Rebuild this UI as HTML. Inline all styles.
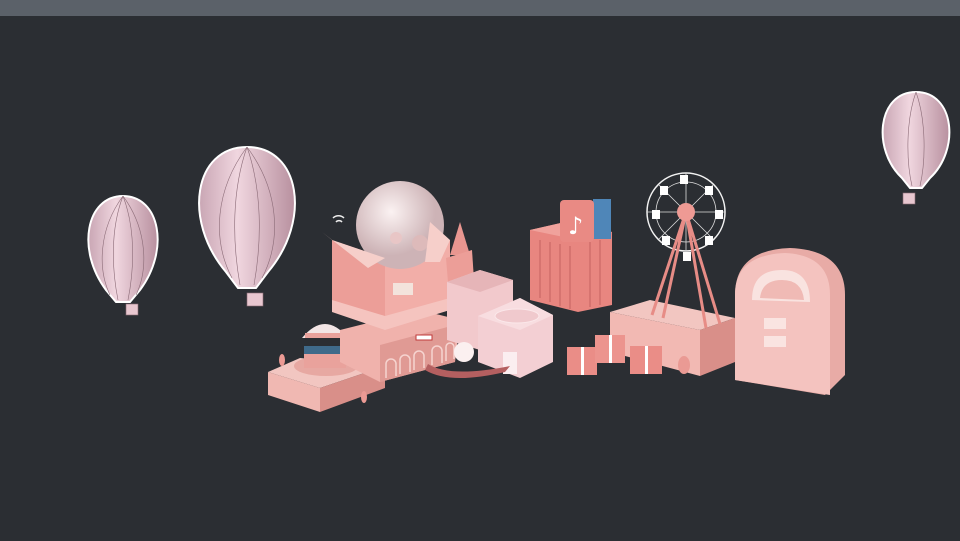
<!DOCTYPE html>
<html><head><meta charset="utf-8"><style>
html,body{margin:0;padding:0;background:#2b2e33;width:960px;height:541px;overflow:hidden}
</style></head><body>
<svg width="960" height="541" viewBox="0 0 960 541" xmlns="http://www.w3.org/2000/svg">
<defs>
<linearGradient id="bal" x1="0" x2="1"><stop offset="0" stop-color="#c9a6b4"/><stop offset="0.4" stop-color="#f0d6df"/><stop offset="1" stop-color="#b8909f"/></linearGradient>
<radialGradient id="moon" cx="0.4" cy="0.35"><stop offset="0" stop-color="#fbf2f2"/><stop offset="1" stop-color="#cdb3b6"/></radialGradient>
</defs>
<rect x="0" y="0" width="960" height="16" fill="#5b6169"/>
<rect x="0" y="16" width="960" height="525" fill="#2b2e33"/>

<!-- balloons -->
<g stroke="#8a6a76" stroke-width="0.6">
<path d="M123 196 C160 196 170 250 140 290 L130 302 L116 302 L106 290 C76 250 86 196 123 196Z" fill="url(#bal)" stroke="#fff" stroke-width="2"/>
<path d="M123 196 C110 230 112 270 118 300 M123 196 C136 230 134 270 128 300 M123 196 C98 230 98 270 110 295 M123 196 C148 230 148 270 136 295" fill="none"/>
<rect x="126" y="304" width="12" height="11" fill="#e8c7d0"/>
<path d="M247 147 C300 147 312 220 268 272 L256 288 L238 288 L226 272 C182 220 194 147 247 147Z" fill="url(#bal)" stroke="#fff" stroke-width="2"/>
<path d="M247 147 C232 190 232 240 240 285 M247 147 C262 190 262 240 254 285 M247 147 C215 190 212 240 232 278 M247 147 C279 190 282 240 262 278" fill="none"/>
<rect x="247" y="293" width="16" height="13" fill="#e8c7d0"/>
<path d="M916 92 C955 92 960 150 930 178 L922 188 L910 188 L902 178 C872 150 877 92 916 92Z" fill="url(#bal)" stroke="#fff" stroke-width="2"/>
<path d="M916 92 C906 120 906 160 912 186 M916 92 C926 120 926 160 920 186" fill="none"/>
<rect x="903" y="193" width="12" height="11" fill="#e8c7d0"/>
</g>

<!-- left platform -->
<polygon points="268,372 300,358 385,366 320,388" fill="#f2c6c1"/>
<polygon points="268,372 320,388 320,412 268,395" fill="#f0b8b2"/>
<polygon points="320,388 385,366 385,388 320,412" fill="#d98f89"/>
<ellipse cx="326" cy="366" rx="32" ry="10" fill="#e7a8a2"/>
<rect x="304" y="350" width="42" height="18" fill="#e9a29c"/>
<rect x="304" y="346" width="42" height="8" fill="#3f6a8a"/>
<path d="M302 338 Q325 310 348 338Z" fill="#f3e6e6"/>
<rect x="305" y="333" width="40" height="5" fill="#e9a29c"/>

<!-- big box building lower -->
<polygon points="340,330 420,310 460,320 455,362 380,382 340,362" fill="#f0b2ac"/>
<polygon points="380,345 455,325 455,362 380,382" fill="#e09a94"/>
<g fill="none" stroke="#f6d4d0" stroke-width="1.5"><path d="M386 378 v-14 a5 5 0 0 1 10 0 v12 M400 374 v-14 a5 5 0 0 1 10 0 v12 M414 370 v-14 a5 5 0 0 1 10 0 v12 M432 365 v-14 a5 5 0 0 1 10 0 v12 M446 361 v-14 a4 4 0 0 1 8 0 v12"/></g>
<rect x="416" y="335" width="16" height="5" fill="#fff" stroke="#c03a3a"/>
<!-- box body -->
<polygon points="332,240 385,258 385,322 332,306" fill="#ec9e98"/>
<polygon points="385,258 450,240 450,305 385,322" fill="#f2aea8"/>
<polygon points="332,300 385,316 450,298 450,310 385,330 332,312" fill="#f5c4bf"/>
<circle cx="400" cy="225" r="44" fill="url(#moon)"/>
<circle cx="396" cy="238" r="6" fill="#e8c6c6"/><circle cx="420" cy="243" r="8" fill="#ddbaba"/>
<polygon points="322,232 332,240 385,258 368,268" fill="#f6cfca"/>
<polygon points="430,222 450,240 440,262 425,262" fill="#f6cfca"/>
<rect x="393" y="283" width="20" height="12" fill="#f3e3dc"/>
<path d="M333 218 a8 8 0 0 1 11 0 M336 222 a4 4 0 0 1 6 0" stroke="#eee" stroke-width="1.5" fill="none"/>

<!-- tower -->
<polygon points="460,222 450,255 470,255" fill="#e89690"/>
<polygon points="446,258 472,250 474,280 448,282" fill="#ec9e98"/>
<!-- pink building -->
<polygon points="447,282 480,270 513,280 513,340 480,350 447,340" fill="#f2c9cc"/>
<polygon points="447,282 480,292 513,280 480,270" fill="#e6b5b8"/>
<!-- dome box -->
<polygon points="478,316 520,298 553,315 553,362 520,378 478,362" fill="#f3cfd3"/>
<polygon points="478,316 520,330 553,315 520,298" fill="#f8dde0"/>
<ellipse cx="517" cy="316" rx="22" ry="7" fill="#f0c9cd" stroke="#fbe8ea"/>
<rect x="503" y="352" width="14" height="22" fill="#fbeef0"/>
<path d="M425 370 Q450 385 505 372 L510 366 Q450 378 428 364Z" fill="#b45f60"/>
<circle cx="464" cy="352" r="10" fill="#fbf0f0"/>

<!-- music building -->
<polygon points="530,230 565,222 612,232 612,305 578,312 530,300" fill="#e88680"/>
<polygon points="530,230 565,222 612,232 578,240" fill="#f0a29c"/>
<g stroke="#cf6f6a" stroke-width="1.5">
<path d="M540 240v58 M550 242v60 M560 244v62 M570 246v63 M590 242v65 M600 240v65"/></g>
<rect x="593" y="199" width="18" height="40" fill="#4f86b8"/>
<rect x="560" y="200" width="34" height="42" rx="4" fill="#e98a84"/>
<text x="568" y="234" font-family="DejaVu Sans, sans-serif" font-size="24" fill="#fff">♪</text>

<!-- right platform -->
<polygon points="610,312 650,300 735,318 700,330" fill="#f2c6c1"/>
<polygon points="610,312 700,330 700,376 610,352" fill="#f2b9b3"/>
<polygon points="700,330 735,318 735,362 700,376" fill="#d98f89"/>
<!-- ferris wheel -->
<circle cx="686" cy="212" r="39" fill="none" stroke="#f2f2f2" stroke-width="1.5"/>
<circle cx="686" cy="212" r="30" fill="none" stroke="#ddd" stroke-width="0.8"/>
<g stroke="#ddd" stroke-width="0.8"><path d="M647 212h78 M686 173v78 M659 185l54 54 M713 185l-54 54"/></g>
<g stroke="#e78c86" stroke-width="3"><path d="M686 212 L652 315 M686 212 L663 318 M686 212 L706 328 M686 212 L720 324"/></g>
<circle cx="686" cy="212" r="9" fill="#ee9a94"/>
<g fill="#fff"><rect x="680" y="175" width="8" height="9"/><rect x="705" y="186" width="8" height="9"/><rect x="715" y="210" width="8" height="9"/><rect x="705" y="236" width="8" height="9"/><rect x="660" y="186" width="8" height="9"/><rect x="652" y="210" width="8" height="9"/><rect x="662" y="236" width="8" height="9"/><rect x="683" y="252" width="8" height="9"/></g>

<!-- gifts -->
<g><rect x="567" y="347" width="30" height="28" fill="#ea8d87"/><rect x="581" y="347" width="3" height="28" fill="#fff"/>
<rect x="595" y="335" width="30" height="28" fill="#ec948e"/><rect x="609" y="335" width="3" height="28" fill="#fff"/>
<rect x="630" y="346" width="32" height="28" fill="#ea8d87"/><rect x="645" y="346" width="3" height="28" fill="#fff"/></g>
<ellipse cx="684" cy="365" rx="6" ry="9" fill="#ea9a94"/>

<!-- jukebox -->
<path d="M735 295 Q735 250 790 248 Q845 250 845 295 L845 375 L825 395 L735 380Z" fill="#e8aba6"/>
<path d="M735 295 Q735 255 785 253 Q830 255 830 295 L830 395 L735 380Z" fill="#f4c3bf"/>
<path d="M752 300 Q752 270 782 270 Q810 270 810 302Z" fill="#f9e3e0"/>
<path d="M760 298 Q762 280 782 280 Q802 280 804 300Z" fill="#f0bab5"/>
<rect x="764" y="318" width="22" height="11" fill="#fae4e1"/>
<rect x="764" y="336" width="22" height="11" fill="#fae4e1"/>
<g fill="#ec9a94"><ellipse cx="282" cy="360" rx="3" ry="6"/><ellipse cx="364" cy="397" rx="3" ry="6"/></g>
</svg>
</body></html>
